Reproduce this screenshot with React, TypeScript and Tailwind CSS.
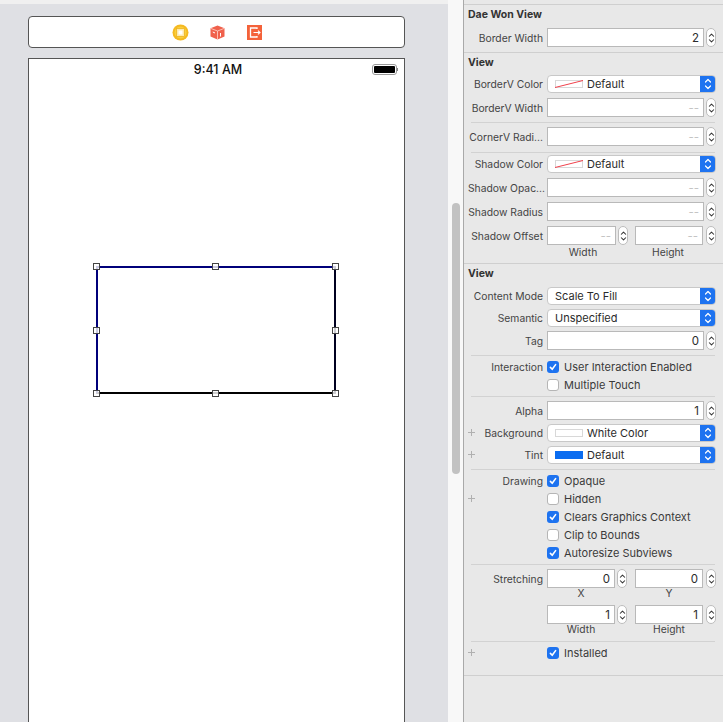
import React from "react";

function Chevrons({ color, className }: { color: string; className?: string }) {
  return (
    <svg viewBox="0 0 8 14" className={className} fill="none" stroke={color} strokeWidth="1.2" strokeLinecap="round" strokeLinejoin="round">
      <path d="M1.5 5 L4 2.5 L6.5 5" />
      <path d="M1.5 9 L4 11.5 L6.5 9" />
    </svg>
  );
}

function Stepper() {
  return (
    <div className="w-[10px] h-[19px] shrink-0 rounded-[5px] border border-[#bdbdbd] bg-white flex items-center justify-center">
      <Chevrons color="#333333" className="w-[7px] h-[14px] shrink-0" />
    </div>
  );
}

function Field({ value, width = "w-[157px]" }: { value?: string; width?: string }) {
  return (
    <div className={`${width} h-[19px] shrink-0 border border-[#b9b9b9] bg-white flex items-center justify-end pr-[4px] pt-[2px] text-[11.5px] ${value ? "text-[#2b2b2b]" : "text-[#c4c4c4]"}`}>
      {value ?? "--"}
    </div>
  );
}

function Label({ text, plus, tall }: { text?: string; plus?: boolean; tall?: boolean }) {
  return (
    <div className="w-[79px] shrink-0 flex items-center justify-between whitespace-nowrap text-[10.3px] text-[#444444] pl-[4px]">
      {plus ? (
        <svg width="7" height="7" viewBox="0 0 7 7" className="mb-[2px] shrink-0" stroke="#b0b0b0" strokeWidth="1">
          <path d="M0 3.5 H7 M3.5 0 V7" />
        </svg>
      ) : (
        <span />
      )}
      <span className={tall ? "pt-[2px]" : "pt-[1px]"}>{text}</span>
    </div>
  );
}

function FieldRow({ label, value, mt }: { label: string; value?: string; mt: string }) {
  return (
    <div className={`${mt} h-[19px] flex items-center gap-[4px]`}>
      <Label text={label} tall />
      <Field value={value} />
      <div className="ml-[-2px]">
        <Stepper />
      </div>
    </div>
  );
}

function Swatch({ kind }: { kind: "none" | "white" | "blue" }) {
  if (kind === "blue") return <div className="w-[28px] h-[8px] bg-[#0a6cf0] shrink-0" />;
  if (kind === "white") return <div className="w-[28px] h-[8px] bg-white border border-[#d8d8d8] shrink-0" />;
  return (
    <svg width="28" height="8" className="shrink-0" viewBox="0 0 28 8">
      <rect x="0.5" y="0.5" width="27" height="7" fill="#ffffff" stroke="#d8d8d8" />
      <path d="M0 7.5 L28 0.5" stroke="#f0404c" strokeWidth="1" />
    </svg>
  );
}

function Popup({ label, text, swatch, mt, plus }: { label: string; text: string; swatch?: "none" | "white" | "blue"; mt: string; plus?: boolean }) {
  return (
    <div className={`${mt} h-[18px] flex items-center gap-[4px]`}>
      <Label text={label} plus={plus} />
      <div className="w-[169px] h-[18px] shrink-0 rounded-[4px] border border-[#c8c8c8] bg-white flex items-center overflow-hidden">
        <div className="flex-1 flex items-center gap-[4px] pl-[7px] text-[11px] text-[#2b2b2b]">
          {swatch && <Swatch kind={swatch} />}
          <span className="pt-[1px]">{text}</span>
        </div>
        <div className="w-[15px] h-[18px] bg-[#1e73f0] flex items-center justify-center">
          <Chevrons color="#ffffff" className="w-[8px] h-[14px]" />
        </div>
      </div>
    </div>
  );
}

function Check({ label, on, title, mt = "", plus }: { label: string; on?: boolean; title?: string; mt?: string; plus?: boolean }) {
  return (
    <div className={`${mt} h-[18px] flex items-center gap-[4px]`}>
      <Label text={title} plus={plus} />
      <div className={`w-[12px] h-[12px] shrink-0 rounded-[3px] flex items-center justify-center ${on ? "bg-[#1e73f0]" : "bg-white border border-[#b5b5b5]"}`}>
        {on && (
          <svg viewBox="0 0 12 12" className="w-[12px] h-[12px]" fill="none" stroke="#ffffff" strokeWidth="1.6" strokeLinecap="round" strokeLinejoin="round">
            <path d="M3.4 6.4 L5.2 8.3 L8.6 3.6" />
          </svg>
        )}
      </div>
      <span className="ml-[1px] text-[11px] text-[#3a3a3a] whitespace-nowrap">{label}</span>
    </div>
  );
}

function Title({ text, mt }: { text: string; mt: string }) {
  return <div className={`${mt} h-[14px] pl-[4px] pt-[1px] flex items-center text-[10.5px] font-bold text-[#333333]`}>{text}</div>;
}

const Line = ({ mt }: { mt: string }) => <div className={`${mt} h-px ml-[7px] mr-[8px] bg-[#d2d2d2]`} />;
const FullLine = ({ mt }: { mt: string }) => <div className={`${mt} h-px bg-[#cfcfcf]`} />;

function PairRow({ label, a, b, mt, wide }: { label?: string; a?: string; b?: string; mt: string; wide?: boolean }) {
  return (
    <div className={`${mt} h-[19px] flex items-center`}>
      <div className="w-[83px] shrink-0 pr-[4px]">
        <Label text={label} tall />
      </div>
      <Field value={a} width={wide ? "w-[69px]" : "w-[68px]"} />
      <div className={wide ? "ml-[2px] mr-[7px]" : "ml-[2px] mr-[8px]"}>
        <Stepper />
      </div>
      <Field value={b} width="w-[68px]" />
      <div className="ml-[3px]">
        <Stepper />
      </div>
    </div>
  );
}

function Caption({ a, b, mt = "", wide }: { a: string; b: string; mt?: string; wide?: boolean }) {
  return (
    <div className={`${mt} h-[12px] flex items-center text-[10.3px] text-[#444444] ${wide ? "pt-[1px]" : ""}`}>
      <div className="w-[83px] shrink-0" />
      <div className={`${wide ? "w-[72px] mr-[16px]" : "w-[68px] mr-[20px]"} text-center`}>{a}</div>
      <div className={`${wide ? "w-[66px]" : "w-[68px]"} text-center`}>{b}</div>
    </div>
  );
}

function Handle({ className }: { className: string }) {
  return <div className={`absolute w-[7px] h-[7px] bg-white/80 border border-[#444444] ${className}`} />;
}

function SelectedView() {
  return (
    <div className="relative ml-[67px] mt-[187px] w-[240px] h-[128px] bg-white border-2 border-t-[#00007a] border-l-[#00007a] border-r-[#000020] border-b-black">
      <Handle className="left-[-5px] top-[-5px]" />
      <Handle className="left-[114px] top-[-5px]" />
      <Handle className="right-[-5px] top-[-5px]" />
      <Handle className="left-[-5px] top-[59px]" />
      <Handle className="right-[-5px] top-[59px]" />
      <Handle className="left-[-5px] bottom-[-5px]" />
      <Handle className="left-[114px] bottom-[-5px]" />
      <Handle className="right-[-5px] bottom-[-5px]" />
    </div>
  );
}

function SceneDock() {
  return (
    <div className="mt-[12px] ml-[28px] w-[377px] h-[32px] bg-white border border-[#555555] rounded-[4px] flex items-center justify-center gap-[21px] pl-[1px]">
      <svg width="17" height="17" viewBox="0 0 17 17">
        <circle cx="8.5" cy="8.5" r="8" fill="#f5b921" />
        <circle cx="8.5" cy="8.5" r="6" fill="#f9cf3c" />
        <rect x="4.5" y="4.5" width="8" height="8" fill="#fde9ac" stroke="#eeb420" strokeWidth="0.8" />
        <rect x="6.5" y="6.5" width="4" height="4" fill="#ffffff" />
      </svg>
      <svg width="15" height="15" viewBox="0 0 15 15">
        <path d="M7.5 0.5 L14.5 3.2 V11.5 L7.5 14.5 L0.5 11.5 V3.2 Z" fill="#f0614c" />
        <path d="M0.8 3.4 L7.5 6 L14.2 3.4 M7.5 6 V14.5" stroke="#ffd6cc" strokeWidth="0.8" fill="none" />
        <path d="M10.5 8 V11.5 M2.8 7 L5 8" stroke="#ffffff" strokeWidth="1" fill="none" />
      </svg>
      <svg width="15" height="15" viewBox="0 0 15 15" className="ml-[1px]">
        <rect width="15" height="15" fill="#f4623a" />
        <path d="M10 4 V3 H3.5 V12 H10 V11" stroke="#ffffff" strokeWidth="1.3" fill="none" />
        <path d="M6.5 7.5 H13 M11 5.6 L13 7.5 L11 9.4" stroke="#ffffff" strokeWidth="1.1" fill="none" />
      </svg>
    </div>
  );
}

function Device() {
  return (
    <div className="mt-[10px] ml-[28px] w-[377px] h-[700px] bg-white border border-[#555555]">
      <div className="h-[20px] relative flex items-center justify-center">
        <span className="text-[12.5px] font-medium text-[#111111] pt-[3px] ml-[3px]">9:41 AM</span>
        <div className="absolute right-[6px] top-[5px] flex items-center">
          <div className="w-[25px] h-[11px] rounded-[3px] border border-[#999999] p-[1px]">
            <div className="w-full h-full rounded-[1px] bg-black" />
          </div>
          <div className="w-px h-[3px] bg-[#888888]" />
        </div>
      </div>
      <SelectedView />
    </div>
  );
}

function Inspector() {
  return (
    <div className="w-[260px] h-[722px] shrink-0 bg-[#e8e8e8] border-l border-[#a9a9a9] overflow-hidden">
      <div className="h-[5px] border-b border-[#cfcfcf]" />
      <Title text="Dae Won View" mt="mt-[2px]" />
      <FieldRow label="Border Width" value="2" mt="mt-[7px]" />
      <FullLine mt="mt-[5px]" />

      <Title text="View" mt="mt-[2px]" />
      <Popup label="BorderV Color" text="Default" swatch="none" mt="mt-[6px]" />
      <FieldRow label="BorderV Width" mt="mt-[5px]" />
      <Line mt="mt-[5px]" />
      <FieldRow label="CornerV Radi..." mt="mt-[4px]" />
      <Line mt="mt-[6px]" />
      <Popup label="Shadow Color" text="Default" swatch="none" mt="mt-[2px]" />
      <FieldRow label="Shadow Opac..." mt="mt-[5px]" />
      <FieldRow label="Shadow Radius" mt="mt-[5px]" />
      <PairRow label="Shadow Offset" mt="mt-[5px]" wide />
      <Caption a="Width" b="Height" mt="mt-[1px]" wide />
      <FullLine mt="mt-[5px]" />

      <Title text="View" mt="mt-[2px]" />
      <Popup label="Content Mode" text="Scale To Fill" mt="mt-[7px]" />
      <Popup label="Semantic" text="Unspecified" mt="mt-[4px]" />
      <FieldRow label="Tag" value="0" mt="mt-[4px]" />
      <Line mt="mt-[5px]" />
      <Check title="Interaction" label="User Interaction Enabled" on mt="mt-[2px]" />
      <Check label="Multiple Touch" />
      <Line mt="mt-[2px]" />
      <FieldRow label="Alpha" value="1" mt="mt-[4px]" />
      <Popup label="Background" text="White Color" swatch="white" mt="mt-[4px]" plus />
      <Popup label="Tint" text="Default" swatch="blue" mt="mt-[4px]" plus />
      <Line mt="mt-[5px]" />
      <Check title="Drawing" label="Opaque" on mt="mt-[2px]" />
      <Check label="Hidden" plus />
      <Check label="Clears Graphics Context" on />
      <Check label="Clip to Bounds" />
      <Check label="Autoresize Subviews" on />
      <Line mt="mt-[2px]" />
      <PairRow label="Stretching" a="0" b="0" mt="mt-[4px]" />
      <Caption a="X" b="Y" />
      <PairRow a="1" b="1" mt="mt-[5px]" />
      <Caption a="Width" b="Height" />
      <Line mt="mt-[5px]" />
      <Check label="Installed" on mt="mt-[2px]" plus />
      <FullLine mt="mt-[13px]" />
    </div>
  );
}

export default function App() {
  return (
    <div className="w-[723px] h-[722px] flex overflow-hidden bg-[#f8f8f8] font-['Inter','Liberation_Sans',sans-serif]">
      <div className="w-[448px] h-[722px] shrink-0 bg-[#dfe0e4] overflow-hidden">
        <div className="h-[4px] bg-[#f0f0f0]" />
        <SceneDock />
        <Device />
      </div>
      <div className="w-[15px] shrink-0 pt-[203px] pl-[4px]">
        <div className="w-[8px] h-[271px] rounded-[4px] bg-[#c2c2c2]" />
      </div>
      <Inspector />
    </div>
  );
}
